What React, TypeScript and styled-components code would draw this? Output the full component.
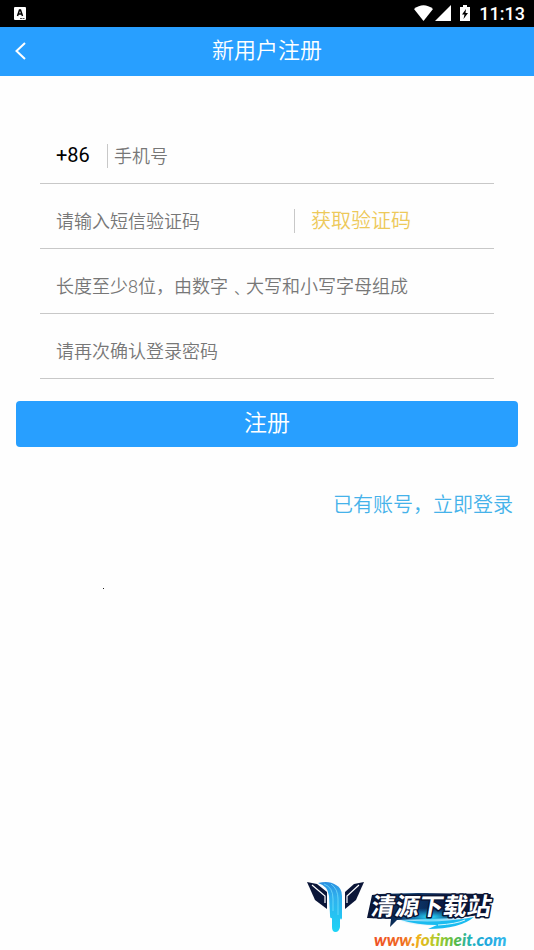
import React from "react";
import styled, { createGlobalStyle } from "styled-components";

const GlobalStyle = createGlobalStyle`
  *, *::before, *::after { box-sizing: border-box; }
  body { margin: 0; background: #fefefe; }
  body, input, button { font-family: Roboto, "Noto Sans CJK SC", sans-serif; }
`;

const Page = styled.div`
  display: flex;
  flex-direction: column;
  min-height: 100vh;
`;

const StatusBar = styled.div`
  display: flex;
  align-items: center;
  justify-content: space-between;
  height: 27px;
  padding: 0 9px 0 14px;
  background: #000;
  color: #fff;
`;

const StatusIcons = styled.div`
  display: flex;
  align-items: center;
`;

const Clock = styled.time`
  margin-left: 8px;
  font-size: 18px;
  font-weight: 500;
  line-height: 27px;
`;

const Header = styled.header`
  display: grid;
  grid-template-columns: 40px 1fr 40px;
  align-items: center;
  height: 49px;
  background: #289fff;
  color: #fff;
`;

const BackButton = styled.button`
  display: flex;
  align-items: center;
  height: 48px;
  padding: 0 0 2px 14px;
  border: 0;
  background: none;
  color: inherit;
`;

const Title = styled.h1`
  margin: 0;
  padding-bottom: 2px;
  font-size: 22px;
  font-weight: 350;
  line-height: 46px;
  text-align: center;
`;

const Form = styled.form`
  display: flex;
  flex-direction: column;
  padding: 43px 16px 0;
`;

const Fields = styled.div`
  margin: 0 24px 22px;
`;

const Row = styled.div`
  display: flex;
  align-items: center;
  height: 65px;
  padding: 9px 16px 0;
  border-bottom: 1px solid #c8c8c8;
`;

const CountryCode = styled.span`
  width: 51px;
  padding-bottom: 2px;
  font-size: 20px;
  color: #000;
`;

const Divider = styled.span`
  width: 1px;
  height: 24px;
  background: #c8c8c8;
`;

const Input = styled.input<{ $inset?: boolean }>`
  flex: 1;
  min-width: 0;
  height: 40px;
  padding: 1px 0 0 ${(p) => (p.$inset ? "6px" : "0")};
  border: 0;
  outline: 0;
  background: none;
  color: #222;
  font-size: 18px;
  font-weight: 350;
  &::placeholder { color: #777; opacity: 1; }
`;

const CodeButton = styled.button`
  width: 183px;
  padding: 0 0 2px 16px;
  border: 0;
  background: none;
  color: #edc95a;
  font-size: 20px;
  font-weight: 350;
  text-align: left;
`;

const Submit = styled.button`
  height: 46px;
  padding: 0 0 6px;
  border: 0;
  border-radius: 4px;
  background: #289fff;
  color: #fff;
  font-size: 23px;
  font-weight: 350;
`;

const LoginLink = styled.a`
  align-self: flex-end;
  margin: 42px 5px 0 0;
  color: #45b2ea;
  font-size: 20px;
  font-weight: 350;
  line-height: 32px;
  text-decoration: none;
`;

const Dot = styled.span`
  width: 1px;
  height: 1px;
  margin: 67px 0 0 103px;
  background: #222;
`;

const Footer = styled.footer`
  display: flex;
  justify-content: flex-end;
  margin-top: auto;
`;

function SiteLogo() {
  return (
    <svg width="234" height="75" viewBox="0 0 234 75" role="img" aria-label="清源下载站 www.fotimeit.com">
      <defs>
        <linearGradient id="stream" x1="0" y1="0" x2="0" y2="1">
          <stop offset="0" stopColor="#2b8fe0" />
          <stop offset="0.3" stopColor="#2fb0ee" />
          <stop offset="1" stopColor="#1ed4f6" />
        </linearGradient>
        <linearGradient id="plate" x1="0" y1="0" x2="1" y2="0">
          <stop offset="0" stopColor="#0a1433" />
          <stop offset="0.35" stopColor="#0b3c70" />
          <stop offset="0.6" stopColor="#0a1c46" />
          <stop offset="1" stopColor="#0a1433" />
        </linearGradient>
        <radialGradient id="glow">
          <stop offset="0" stopColor="#2be0ff" />
          <stop offset="1" stopColor="#149bea" stopOpacity="0" />
        </radialGradient>
        <linearGradient id="rainbow" x1="0" y1="0" x2="1" y2="0">
          <stop offset="0" stopColor="#ee5126" />
          <stop offset="0.22" stopColor="#ef6a22" />
          <stop offset="0.34" stopColor="#efb51e" />
          <stop offset="0.48" stopColor="#a8cc2c" />
          <stop offset="0.62" stopColor="#55b948" />
          <stop offset="0.72" stopColor="#25b4b4" />
          <stop offset="0.85" stopColor="#21a7e0" />
          <stop offset="1" stopColor="#35b8ea" />
        </linearGradient>
      </defs>

      <path d="M7 7 L17 9 L27 17 V34 L15 25 Z" fill="#0b1638" />
      <path d="M12 10 L25 21 V28" stroke="#fff" strokeWidth="1.200" fill="none" />
      <path d="M64 7 L54 9 L45 17 V34 L56 25 Z" fill="#0b1638" />
      <path d="M59 10 L47 21 V28" stroke="#fff" strokeWidth="1.200" fill="none" />
      <path
        d="M18 8 Q29 5 36 10 Q42 13 42 21 V43 Q41 46 40 43 V52 Q39 57 35.500 57 Q32 57 32 52 V43 Q30 44 30 40 L29 21 Q28 11 18 8 Z"
        fill="url(#stream)"
      />
      <path d="M24 9 Q33 12 33 24 V36 M31 9 Q38 14 38 24 V40" stroke="#7ce2fa" strokeWidth="0.700" fill="none" />

      <path d="M72 20 L80 19 L118 18 L191 19 L188 39 L156 43 L97 45 L90 52 L91 44 L67 43 Z" fill="url(#plate)" />
      <ellipse cx="130" cy="42" rx="34" ry="9" fill="url(#glow)" />
      <path d="M101 45 Q137 49 174 42 Q160 54 128 54 L137 50 Q117 50 101 45 Z" fill="#1bbcf0" />
      <path d="M138 50 Q156 49 165 45" stroke="#d4f8ff" strokeWidth="1" fill="none" />
      <text
        transform="translate(70 40) skewX(-10)"
        fontFamily="'Noto Sans CJK SC', sans-serif"
        fontSize="24"
        fontWeight="700"
        fill="#fff"
        stroke="#0a1433"
        strokeWidth="3"
        strokeLinejoin="round"
        paintOrder="stroke"
      >
        清源下载站
      </text>
      <text
        x="74"
        y="71"
        fontFamily="Lato, sans-serif"
        fontSize="17"
        fontWeight="900"
        fontStyle="italic"
        fill="url(#rainbow)"
      >
        www.fotimeit.com
      </text>
    </svg>
  );
}

export default function App() {
  return (
    <Page>
      <GlobalStyle />
      <StatusBar>
        <svg width="12" height="13" viewBox="0 0 12 13" aria-hidden="true">
          <rect width="12" height="13" rx="1" fill="#fff" />
          <path d="M3.500 9 L5.500 3 H6.500 L8.500 9 M4.500 7 H7.500" stroke="#000" strokeWidth="1.500" fill="none" />
          <path d="M6 11.500 H11" stroke="#000" strokeWidth="0.700" strokeDasharray="2 0.500" />
        </svg>
        <StatusIcons>
          <svg width="58" height="17" viewBox="0 0 58 17" aria-hidden="true">
            <path d="M1 4 Q10.500 -3.500 20 4 L10.500 16 Z" fill="#fff" />
            <path d="M22 16 L38 0 V16 Z" fill="#fff" />
            <path d="M47 2 H50 V0 H54 V2 H57 V16 H47 Z" fill="#fff" />
            <path d="M53 4 L49 9.500 H51.500 L50.500 14 L55 8 H52.500 Z" fill="#000" />
          </svg>
          <Clock>11:13</Clock>
        </StatusIcons>
      </StatusBar>
      <Header>
        <BackButton type="button" aria-label="返回">
          <svg width="13" height="18" viewBox="0 0 13 18" aria-hidden="true">
            <path d="M11 1 L2.500 9 L11 17" stroke="currentColor" strokeWidth="2" fill="none" />
          </svg>
        </BackButton>
        <Title>新用户注册</Title>
      </Header>
      <Form onSubmit={(e) => e.preventDefault()}>
        <Fields>
          <Row>
            <CountryCode>+86</CountryCode>
            <Divider />
            <Input $inset type="tel" aria-label="手机号" placeholder="手机号" />
          </Row>
          <Row>
            <Input type="text" aria-label="短信验证码" placeholder="请输入短信验证码" />
            <Divider />
            <CodeButton type="button">获取验证码</CodeButton>
          </Row>
          <Row>
            <Input type="password" aria-label="登录密码" placeholder="长度至少8位，由数字﹑大写和小写字母组成" />
          </Row>
          <Row>
            <Input type="password" aria-label="确认登录密码" placeholder="请再次确认登录密码" />
          </Row>
        </Fields>
        <Submit type="submit">注册</Submit>
        <LoginLink href="#login">已有账号，立即登录</LoginLink>
      </Form>
      <Dot />
      <Footer>
        <SiteLogo />
      </Footer>
    </Page>
  );
}
